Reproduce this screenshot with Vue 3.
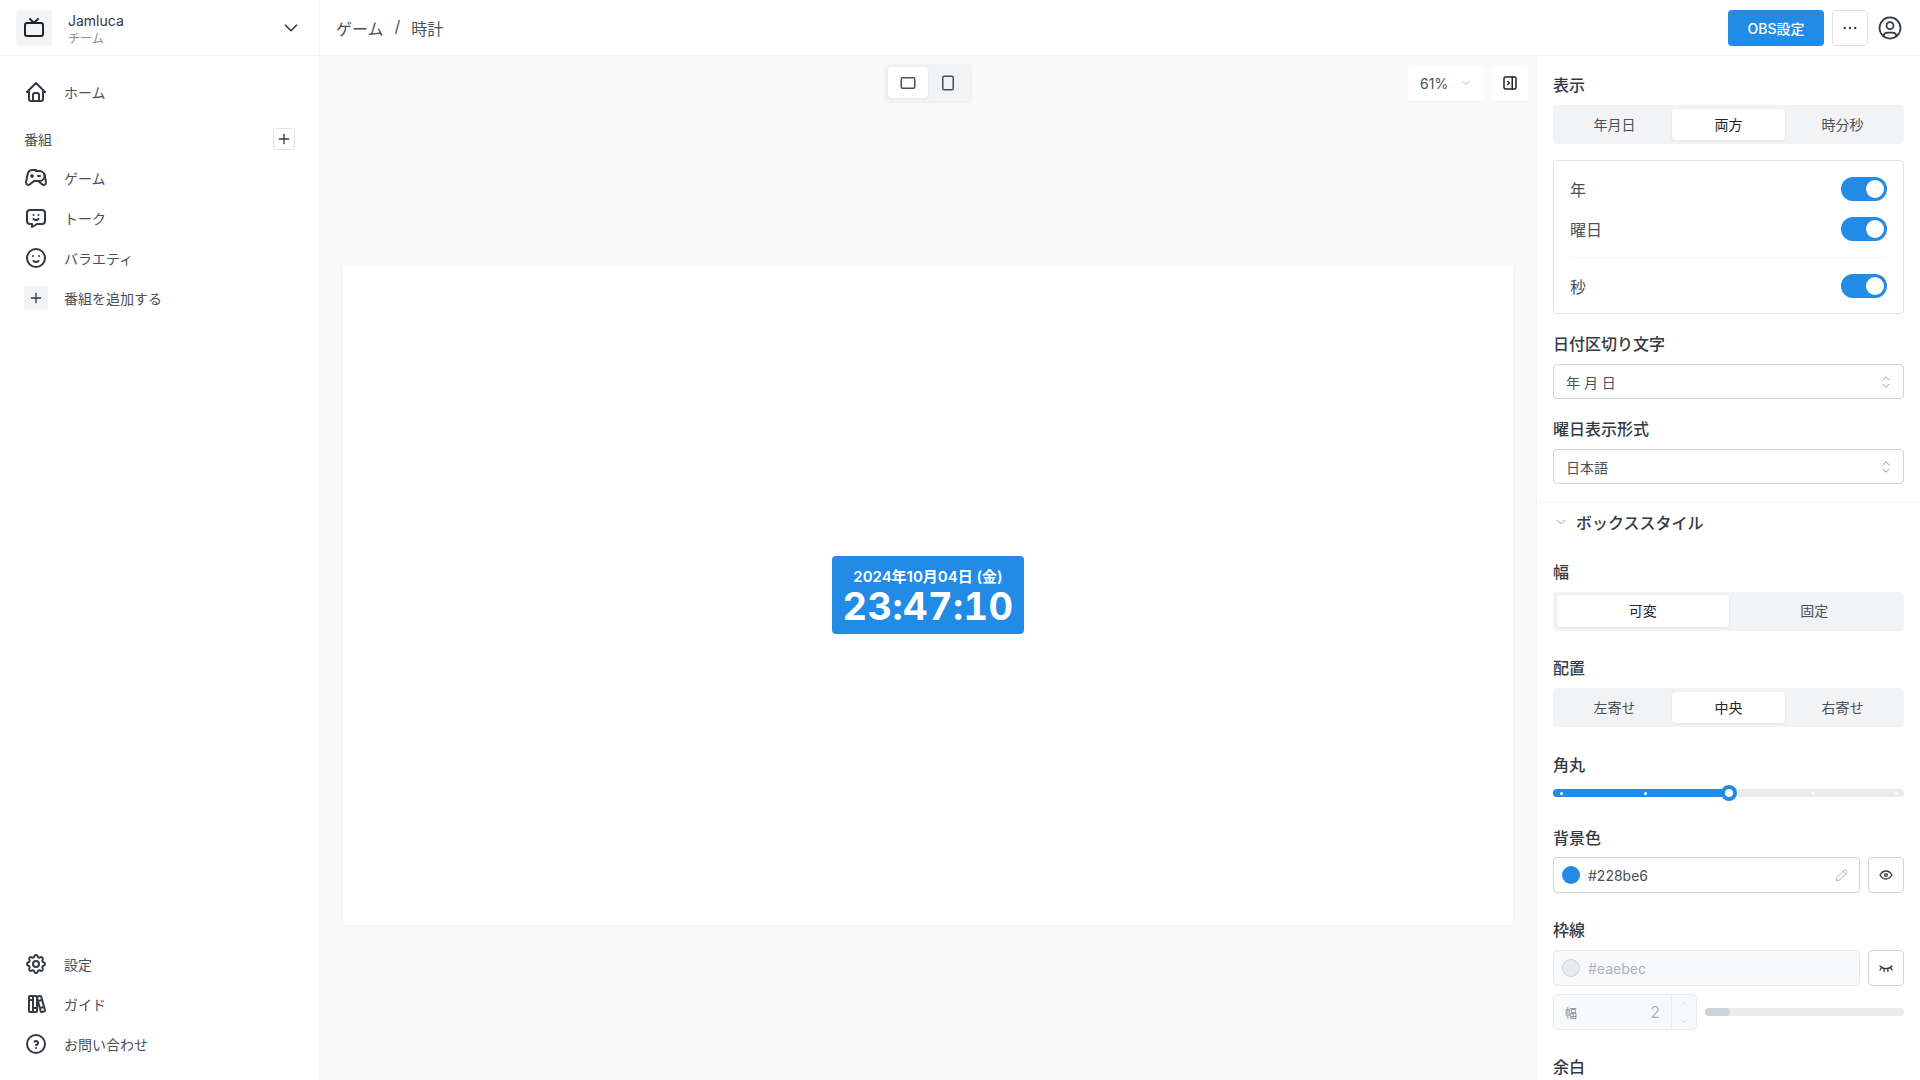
<script setup>
import { h } from 'vue'

const circle = (cx, cy, r) => `M${cx - r} ${cy}a${r} ${r} 0 1 0 ${2 * r} 0a${r} ${r} 0 1 0 ${-2 * r} 0`
const rrect = (x, y, w, h2, r) => `M${x + r} ${y}h${w - 2 * r}a${r} ${r} 0 0 1 ${r} ${r}v${h2 - 2 * r}a${r} ${r} 0 0 1 ${-r} ${r}h${-(w - 2 * r)}a${r} ${r} 0 0 1 ${-r} ${-r}v${-(h2 - 2 * r)}a${r} ${r} 0 0 1 ${r} ${-r}z`

const icons = {
  tv: [rrect(3, 7, 18, 13, 2), 'M16 3l-4 4l-4 -4'],
  chevron: ['M6 9l6 6l6 -6'],
  home: ['M5 12l-2 0l9 -9l9 9l-2 0', 'M5 12v7a2 2 0 0 0 2 2h10a2 2 0 0 0 2 -2v-7', 'M9 21v-6a2 2 0 0 1 2 -2h2a2 2 0 0 1 2 2v6'],
  plus: ['M12 5l0 14', 'M5 12l14 0'],
  game: ['M12 5h3.5a5 5 0 0 1 0 10h-5.5l-4.015 3.212a2.3 2.3 0 0 1 -3.923 -2.035l1.634 -8.173a5 5 0 0 1 4.904 -4.004h3.4z', 'M14 15l4.07 3.276a2.3 2.3 0 0 0 3.925 -2.04l-1.379 -8.09', 'M8 9v2', 'M7 10h2', 'M14 10h2'],
  chat: ['M18 4a3 3 0 0 1 3 3v8a3 3 0 0 1 -3 3h-5l-5 3v-3h-2a3 3 0 0 1 -3 -3v-8a3 3 0 0 1 3 -3h12z', 'M9.5 9h.01', 'M14.5 9h.01', 'M9.5 13a3.5 3.5 0 0 0 5 0'],
  smile: [circle(12, 12, 9), 'M9 10l.01 0', 'M15 10l.01 0', 'M9.5 15a3.5 3.5 0 0 0 5 0'],
  settings: ['M10.325 4.317c.426 -1.756 2.924 -1.756 3.35 0a1.724 1.724 0 0 0 2.573 1.066c1.543 -.94 3.31 .826 2.37 2.37a1.724 1.724 0 0 0 1.065 2.572c1.756 .426 1.756 2.924 0 3.35a1.724 1.724 0 0 0 -1.066 2.573c.94 1.543 -.826 3.31 -2.37 2.37a1.724 1.724 0 0 0 -2.572 1.065c-.426 1.756 -2.924 1.756 -3.35 0a1.724 1.724 0 0 0 -2.573 -1.066c-1.543 .94 -3.31 -.826 -2.37 -2.37a1.724 1.724 0 0 0 -1.065 -2.572c-1.756 -.426 -1.756 -2.924 0 -3.35a1.724 1.724 0 0 0 1.066 -2.573c-.94 -1.543 .826 -3.31 2.37 -2.37c1 .608 2.296 .07 2.572 -1.065z', circle(12, 12, 3)],
  books: ['M5 4m0 1a1 1 0 0 1 1 -1h2a1 1 0 0 1 1 1v14a1 1 0 0 1 -1 1h-2a1 1 0 0 1 -1 -1z', 'M9 4m0 1a1 1 0 0 1 1 -1h2a1 1 0 0 1 1 1v14a1 1 0 0 1 -1 1h-2a1 1 0 0 1 -1 -1z', 'M5 8h4', 'M9 16h4', 'M13.803 4.56l2.184 -.53c.562 -.135 1.133 .19 1.282 .732l3.695 13.438a1.02 1.02 0 0 1 -.634 1.219l-.133 .041l-2.184 .53c-.562 .135 -1.133 -.19 -1.282 -.732l-3.695 -13.438a1.02 1.02 0 0 1 .634 -1.219l.133 -.041z', 'M14 9l4 -1', 'M16 16l3.923 -.98'],
  help: [circle(12, 12, 9), 'M12 16v.01', 'M12 13a2 2 0 0 0 .914 -3.782a1.98 1.98 0 0 0 -2.414 .483'],
  user: [circle(12, 12, 9), circle(12, 10, 3), 'M6.168 18.849a4 4 0 0 1 3.832 -2.849h4a4 4 0 0 1 3.834 2.855'],
  dots: [circle(5, 12, 0.6), circle(12, 12, 0.6), circle(19, 12, 0.6)],
  selector: ['M8 9l4 -4l4 4', 'M16 15l-4 4l-4 -4'],
  pencil: ['M4 20h4l10.5 -10.5a2.828 2.828 0 1 0 -4 -4l-10.5 10.5v4', 'M13.5 6.5l4 4'],
  eye: ['M10 12a2 2 0 1 0 4 0a2 2 0 0 0 -4 0', 'M21 12c-2.4 4 -5.4 6 -9 6c-3.6 0 -6.6 -2 -9 -6c2.4 -4 5.4 -6 9 -6c3.6 0 6.6 2 9 6'],
  eyeClosed: ['M21 9c-2.4 2.667 -5.4 4 -9 4c-3.6 0 -6.6 -1.333 -9 -4', 'M3 15l2.5 -3.8', 'M21 14.976l-2.492 -3.776', 'M9 17l.5 -4', 'M15 17l-.5 -4'],
  rect: [rrect(3, 5, 18, 14, 2)],
  rectV: [rrect(5, 3, 14, 18, 2)],
  side: [rrect(4, 4, 16, 16, 2), 'M15 4v16', 'M9 10l2 2l-2 2'],
}

const Icon = (props) =>
  h('svg', {
    width: props.size || 24,
    height: props.size || 24,
    viewBox: '0 0 24 24',
    fill: 'none',
    stroke: 'currentColor',
    'stroke-width': props.sw || 2,
    'stroke-linecap': 'round',
    'stroke-linejoin': 'round',
    style: { display: 'block', flex: 'none' },
  }, icons[props.name].map((d) => h('path', { d })))
Icon.props = ['name', 'size', 'sw']

const shows = [
  { icon: 'game', label: 'ゲーム' },
  { icon: 'chat', label: 'トーク' },
  { icon: 'smile', label: 'バラエティ' },
]
const footer = [
  { icon: 'settings', label: '設定' },
  { icon: 'books', label: 'ガイド' },
  { icon: 'help', label: 'お問い合わせ' },
]
const marks = [8, 92, 259, 343]
</script>

<template>
  <div class="app">
    <aside class="sidebar">
      <div class="team">
        <div class="team-logo"><Icon name="tv" :size="24" /></div>
        <div class="team-text">
          <div class="team-name">Jamluca</div>
          <div class="team-kind">チーム</div>
        </div>
        <Icon class="team-chev" name="chevron" :size="22" :sw="1.8" />
      </div>
      <nav class="nav-top">
        <a class="nav-item home"><Icon name="home" /><span>ホーム</span></a>
        <div class="section">
          <span>番組</span>
          <button class="mini"><Icon name="plus" :size="16" /></button>
        </div>
        <a v-for="s in shows" :key="s.label" class="nav-item"><Icon :name="s.icon" /><span>{{ s.label }}</span></a>
        <a class="nav-item add"><span class="add-box"><Icon name="plus" :size="16" /></span><span>番組を追加する</span></a>
      </nav>
      <nav class="nav-bottom">
        <a v-for="s in footer" :key="s.label" class="nav-item"><Icon :name="s.icon" /><span>{{ s.label }}</span></a>
      </nav>
    </aside>

    <div class="main">
      <header class="topbar">
        <div class="crumbs"><span>ゲーム</span><span class="sep">/</span><span>時計</span></div>
        <div class="actions">
          <button class="obs">OBS設定</button>
          <button class="square"><Icon name="dots" :size="18" /></button>
          <Icon class="avatar" name="user" :size="28" :sw="1.5" />
        </div>
      </header>

      <div class="body">
        <section class="stage">
          <div class="toolbar">
            <div class="device">
              <span class="device-btn on"><Icon name="rect" :size="18" /></span>
              <span class="device-btn"><Icon name="rectV" :size="18" /></span>
            </div>
            <div class="tools">
              <div class="zoom-select"><span>61%</span><Icon class="zoom-chev" name="chevron" :size="12" /></div>
              <button class="side-btn"><Icon name="side" :size="18" /></button>
            </div>
          </div>
          <div class="canvas-wrap">
            <div class="canvas">
              <div class="clock">
                <div class="clock-date">2024年10月04日 (金)</div>
                <div class="clock-time">23:47:10</div>
              </div>
            </div>
          </div>
        </section>

        <aside class="panel">
          <div class="block">
            <div class="label first">表示</div>
            <div class="seg three">
              <span>年月日</span><span class="on">両方</span><span>時分秒</span>
            </div>
            <div class="card">
              <div class="row"><span>年</span><i class="toggle"></i></div>
              <div class="row r2"><span>曜日</span><i class="toggle"></i></div>
              <div class="card-line"></div>
              <div class="row r3"><span>秒</span><i class="toggle"></i></div>
            </div>
            <div class="label l-sep">日付区切り文字</div>
            <div class="select"><span>年 月 日</span><Icon class="sel" name="selector" :size="18" :sw="1.2" /></div>
            <div class="label l-week">曜日表示形式</div>
            <div class="select"><span>日本語</span><Icon class="sel" name="selector" :size="18" :sw="1.2" /></div>
          </div>
          <div class="rule"></div>
          <div class="block">
            <div class="acc"><Icon class="acc-chev" name="chevron" :size="14" :sw="1.5" /><span>ボックススタイル</span></div>
            <div class="label l-width">幅</div>
            <div class="seg two">
              <span class="on">可変</span><span>固定</span>
            </div>
            <div class="label l-group">配置</div>
            <div class="seg three">
              <span>左寄せ</span><span class="on">中央</span><span>右寄せ</span>
            </div>
            <div class="label l-corner">角丸</div>
            <div class="slider">
              <div class="fill"></div>
              <i v-for="(m, i) in marks" :key="m" class="mark" :class="{ off: i > 1 }" :style="{ left: m + 'px' }"></i>
              <i class="thumb"></i>
            </div>
            <div class="label l-bg">背景色</div>
            <div class="color-row">
              <div class="color">
                <i class="swatch"></i><span>#228be6</span>
                <Icon class="pen" name="pencil" :size="16" :sw="1.5" />
              </div>
              <button class="eye"><Icon name="eye" :size="16" /></button>
            </div>
            <div class="label l-border">枠線</div>
            <div class="color-row">
              <div class="color disabled">
                <i class="swatch grey"></i><span>#eaebec</span>
              </div>
              <button class="eye"><Icon name="eyeClosed" :size="16" /></button>
            </div>
            <div class="width-row">
              <div class="num">
                <span class="num-label">幅</span><span class="num-val">2</span>
                <span class="stepper">
                  <Icon class="step up" name="chevron" :size="12" :sw="1.5" />
                  <Icon name="chevron" :size="12" :sw="1.5" />
                </span>
              </div>
              <div class="mini-slider"><div class="mini-fill"></div></div>
            </div>
            <div class="label l-pad">余白</div>
          </div>
        </aside>
      </div>
    </div>
  </div>
</template>

<style>
html, body { margin: 0; height: 100%; overflow: hidden; background: #fff; }
</style>

<style scoped>
.app {
  display: flex;
  width: 1920px;
  height: 1080px;
  overflow: hidden;
  background: #fff;
  color: #343a40;
  font-family: Inter, "Noto Sans CJK JP", sans-serif;
  font-size: 14px;
}
button { font-family: inherit; padding: 0; cursor: pointer; }

/* sidebar */
.sidebar {
  width: 320px;
  box-sizing: border-box;
  border-right: 1px solid #f1f3f5;
  display: flex;
  flex-direction: column;
  flex: none;
}
.team {
  height: 56px;
  box-sizing: border-box;
  border-bottom: 1px solid #f1f3f5;
  display: flex;
  align-items: center;
  padding: 0 17px 0 16px;
  flex: none;
}
.team-logo {
  width: 36px;
  height: 36px;
  border-radius: 4px;
  background: #f1f3f5;
  display: flex;
  align-items: center;
  justify-content: center;
  color: #212529;
}
.team-text { margin-left: 16px; flex: 1; padding-top: 4px; }
.team-name { font-size: 14px; line-height: 18px; font-weight: 400; color: #343a40; }
.team-kind { font-size: 12px; line-height: 17px; color: #868e96; }
.team-chev { color: #343a40; }
.nav-top { padding-top: 16px; flex: 1; }
.nav-item {
  height: 40px;
  display: flex;
  align-items: center;
  padding-left: 24px;
  color: #495057;
  font-size: 14px;
}
.nav-item svg { color: #343a40; }
.nav-item > span:last-child { margin-left: 16px; }
.section {
  height: 32px;
  margin: 11px 0 3px;
  padding: 0 24px;
  display: flex;
  align-items: center;
  justify-content: space-between;
  font-size: 14px;
  color: #495057;
}
.mini {
  width: 22px;
  height: 22px;
  background: #fff;
  border: 1px solid #dee2e6;
  border-radius: 4px;
  display: flex;
  align-items: center;
  justify-content: center;
  color: #343a40;
}
.add-box {
  width: 24px;
  height: 24px;
  border-radius: 2px;
  background: #f1f3f5;
  display: flex;
  align-items: center;
  justify-content: center;
}
.nav-bottom { padding-bottom: 16px; }

/* main */
.main { flex: 1; display: flex; flex-direction: column; min-width: 0; }
.topbar {
  height: 56px;
  box-sizing: border-box;
  border-bottom: 1px solid #f1f3f5;
  display: flex;
  align-items: center;
  justify-content: space-between;
  padding: 0 16px;
  flex: none;
}
.crumbs { display: flex; gap: 11px; font-size: 16px; color: #495057; }
.actions { display: flex; align-items: center; }
.obs {
  width: 96px;
  height: 36px;
  border: 0;
  border-radius: 4px;
  background: #228be6;
  color: #fff;
  font-size: 14px;
  font-weight: 500;
}
.square {
  width: 36px;
  height: 36px;
  margin-left: 8px;
  background: #fff;
  border: 1px solid #dee2e6;
  border-radius: 4px;
  color: #343a40;
  display: flex;
  align-items: center;
  justify-content: center;
}
.avatar { margin-left: 8px; color: #343a40; }
.body { flex: 1; display: flex; min-height: 0; }

/* stage */
.stage {
  flex: 1;
  min-width: 0;
  background: #fafafa;
  display: flex;
  flex-direction: column;
}
.toolbar {
  height: 54px;
  flex: none;
  position: relative;
  display: flex;
  justify-content: center;
  padding-top: 8px;
  box-sizing: border-box;
}
.device {
  height: 38px;
  width: 88px;
  padding: 3px 4px 4px;
  box-sizing: border-box;
  background: #f1f3f5;
  border-radius: 4px;
  display: flex;
  box-shadow: 0 1px 2px rgba(0, 0, 0, 0.06);
}
.device-btn {
  width: 40px;
  height: 31px;
  display: flex;
  align-items: center;
  justify-content: center;
  border-radius: 4px;
  color: #495057;
}
.device-btn.on { background: #fff; box-shadow: 0 1px 3px rgba(0, 0, 0, 0.08); }
.tools { position: absolute; right: 8px; top: 9px; display: flex; gap: 8px; }
.zoom-select {
  width: 76px;
  height: 36px;
  box-sizing: border-box;
  padding: 0 12px;
  background: #fff;
  border-radius: 4px;
  display: flex;
  align-items: center;
  justify-content: space-between;
  color: #495057;
  font-size: 14px;
  box-shadow: 0 1px 2px rgba(0, 0, 0, 0.04);
}
.zoom-chev { color: #adb5bd; }
.side-btn {
  width: 36px;
  height: 36px;
  background: #fff;
  border: 0;
  border-radius: 4px;
  display: flex;
  align-items: center;
  justify-content: center;
  color: #212529;
  box-shadow: 0 1px 2px rgba(0, 0, 0, 0.04);
}
.canvas-wrap {
  flex: 1;
  display: flex;
  align-items: center;
  justify-content: center;
  min-height: 0;
}
.canvas {
  width: 1170px;
  height: 660px;
  background: #fff;
  box-shadow: 0 1px 3px rgba(0, 0, 0, 0.03);
  display: flex;
  align-items: center;
  justify-content: center;
}
.clock {
  width: 192px;
  height: 78px;
  border-radius: 4px;
  background: #228be6;
  color: #fff;
  display: flex;
  flex-direction: column;
  align-items: center;
  justify-content: center;
  padding-top: 1px;
  box-sizing: border-box;
}
.clock-date { font-size: 15px; line-height: 20px; font-weight: 600; }
.clock-time { font-size: 38px; line-height: 38px; font-weight: 700; font-variant-numeric: tabular-nums; letter-spacing: 0.4px; }

/* panel */
.panel {
  width: 384px;
  flex: none;
  background: #fff;
  box-sizing: border-box;
  border-left: 1px solid #f1f3f5;
  overflow: hidden;
}
.block { padding: 0 16px; }
.label { font-size: 16px; font-weight: 500; line-height: 20px; color: #343a40; }
.label.first { margin-top: 19px; }
.seg {
  height: 39px;
  margin-top: 10px;
  background: #f1f3f5;
  border-radius: 4px;
  padding: 4px;
  box-sizing: border-box;
  display: grid;
  font-size: 14px;
  color: #495057;
}
.seg.three { grid-template-columns: 1fr 113px 1fr; }
.seg.two { grid-template-columns: 1fr 1fr; padding-top: 3px; }
.seg span {
  display: flex;
  align-items: center;
  justify-content: center;
  border-radius: 4px;
  padding-bottom: 2px;
  box-sizing: border-box;
}
.seg span.on { background: #fff; color: #212529; box-shadow: 0 1px 3px rgba(0, 0, 0, 0.08); }
.card {
  margin-top: 16px;
  height: 154px;
  border: 1px solid #dee2e6;
  border-radius: 4px;
  box-sizing: border-box;
  padding: 16px 16px 0;
}
.row {
  height: 24px;
  display: flex;
  align-items: center;
  justify-content: space-between;
  color: #495057;
  font-size: 16px;
}
.r2 { margin-top: 16px; }
.r3 { margin-top: 16px; }
.card-line { height: 1px; background: #f1f3f5; margin-top: 16px; }
.toggle {
  width: 46px;
  height: 24px;
  border-radius: 12px;
  background: #228be6;
  position: relative;
  display: block;
}
.toggle::after {
  content: "";
  position: absolute;
  right: 3px;
  top: 3px;
  width: 18px;
  height: 18px;
  border-radius: 50%;
  background: #fff;
}
.l-sep { margin-top: 20px; }
.l-week { margin-top: 20px; }
.select {
  height: 35px;
  margin-top: 10px;
  border: 1px solid #ced4da;
  border-radius: 4px;
  box-sizing: border-box;
  padding: 0 8px 0 12px;
  display: flex;
  align-items: center;
  justify-content: space-between;
  color: #495057;
}
.sel { color: #868e96; }
.rule { height: 1px; background: #f1f3f5; margin-top: 18px; }
.acc {
  height: 38px;
  display: flex;
  align-items: center;
  gap: 8px;
  font-size: 16px;
  font-weight: 500;
  color: #343a40;
}
.acc-chev { color: #868e96; margin-left: 1px; }
.l-width { margin-top: 21px; }
.l-group { margin-top: 27px; }
.l-corner { margin-top: 28px; }
.slider {
  position: relative;
  height: 8px;
  margin-top: 14px;
  background: #e9ecef;
  border-radius: 4px;
}
.fill {
  position: absolute;
  left: 0;
  top: 0;
  bottom: 0;
  width: 176px;
  background: #228be6;
  border-radius: 4px;
}
.mark {
  position: absolute;
  top: 2.5px;
  width: 3px;
  height: 3px;
  margin-left: -1.5px;
  background: #fff;
  border-radius: 50%;
}
.thumb {
  position: absolute;
  left: 168px;
  top: -4px;
  width: 16px;
  height: 16px;
  box-sizing: border-box;
  border: 4px solid #228be6;
  background: #fff;
  border-radius: 50%;
}
.l-bg { margin-top: 31px; }
.l-border { margin-top: 27px; }
.color-row { display: flex; gap: 8px; margin-top: 9px; }
.l-border + .color-row { margin-top: 10px; }
.color {
  flex: 1;
  height: 36px;
  box-sizing: border-box;
  border: 1px solid #ced4da;
  border-radius: 4px;
  display: flex;
  align-items: center;
  padding: 0 9px 0 8px;
  color: #495057;
  font-size: 14px;
}
.swatch {
  width: 18px;
  height: 18px;
  border-radius: 50%;
  background: #228be6;
  margin-right: 8px;
  flex: none;
}
.swatch.grey { background: #e9ecef; box-shadow: inset 0 0 0 1px #ced4da; }
.pen { margin-left: auto; color: #adb5bd; }
.color.disabled { background: #f8f9fa; border-color: #e9ecef; color: #adb5bd; }
.eye {
  width: 36px;
  height: 36px;
  background: #fff;
  border: 1px solid #ced4da;
  border-radius: 4px;
  display: flex;
  align-items: center;
  justify-content: center;
  color: #343a40;
}
.width-row { display: flex; align-items: center; gap: 8px; margin-top: 8px; }
.num {
  width: 144px;
  height: 36px;
  box-sizing: border-box;
  background: #f8f9fa;
  border: 1px solid #e9ecef;
  border-radius: 4px;
  display: flex;
  align-items: center;
  color: #adb5bd;
  flex: none;
}
.num-label { font-size: 12px; margin-left: 11px; color: #868e96; }
.num-val { margin-left: auto; margin-right: 11px; font-size: 16px; }
.stepper {
  width: 24px;
  height: 100%;
  border-left: 1px solid #e9ecef;
  display: flex;
  flex-direction: column;
  align-items: center;
  justify-content: center;
  gap: 5px;
  color: #ced4da;
}
.step.up { transform: rotate(180deg); }
.mini-slider { flex: 1; height: 8px; background: #e9ecef; border-radius: 4px; position: relative; }
.mini-fill { position: absolute; left: 0; top: 0; bottom: 0; width: 25px; background: #ced4da; border-radius: 4px; }
.l-pad { margin-top: 27px; }
</style>
